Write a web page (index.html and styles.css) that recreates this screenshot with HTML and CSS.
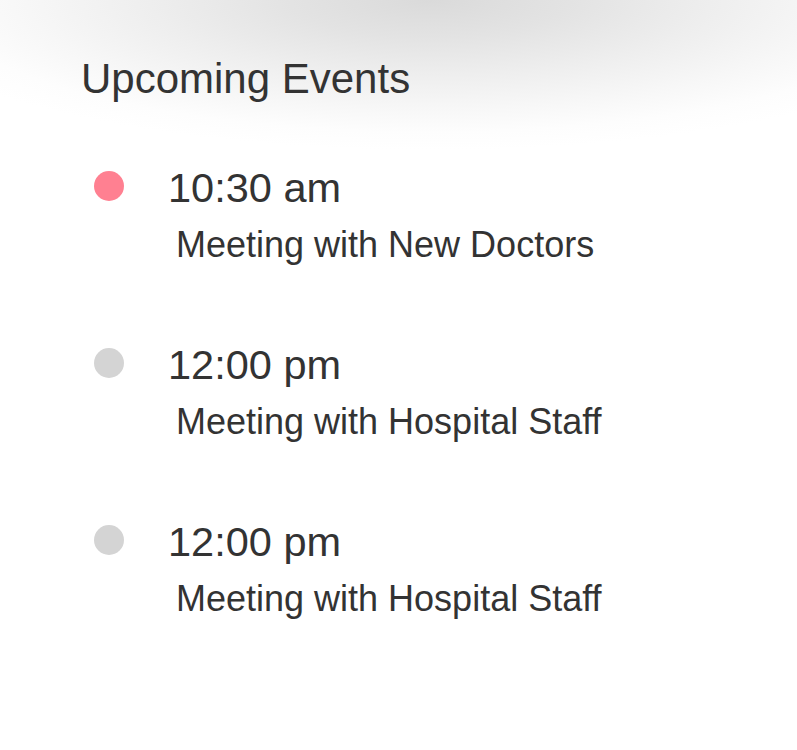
FILE: index.html
```html
<!DOCTYPE html>
<html>
<head>
<meta charset="utf-8">
<link rel="stylesheet" href="styles.css">
</head>
<body>
<div class="page">
  <section class="events">
    <h2 class="title">Upcoming Events</h2>
    <ul class="list">
      <li class="item">
        <span class="dot dot-active"></span>
        <div class="info">
          <div class="time">10:30 am</div>
          <div class="desc">Meeting with New Doctors</div>
        </div>
      </li>
      <li class="item">
        <span class="dot"></span>
        <div class="info">
          <div class="time">12:00 pm</div>
          <div class="desc">Meeting with Hospital Staff</div>
        </div>
      </li>
      <li class="item">
        <span class="dot"></span>
        <div class="info">
          <div class="time">12:00 pm</div>
          <div class="desc">Meeting with Hospital Staff</div>
        </div>
      </li>
    </ul>
  </section>
</div>
</body>
</html>
```

FILE: styles.css
```css
html, body {
  margin: 0;
  padding: 0;
  background: #fff;
}
body {
  font-family: "Liberation Sans", Arial, sans-serif;
  color: #333;
  width: 797px;
  height: 750px;
  overflow: hidden;
}
.page {
  height: 750px;
  background: radial-gradient(ellipse 560px 150px at 54% 0, #dadada 0%, #e3e3e3 25%, #eeeeee 50%, #f7f7f7 72%, #fdfdfd 88%, #fff 100%) no-repeat;
}
.events {
  padding: 56px 0 0 81px;
}
.title {
  margin: 0;
  font-weight: normal;
  font-size: 42px;
  line-height: 46px;
}
.list {
  list-style: none;
  margin: 62px 0 0;
  padding: 0;
}
.item {
  display: flex;
  align-items: flex-start;
  height: 177px;
}
.dot {
  width: 30px;
  height: 30px;
  border-radius: 50%;
  background: #d4d4d4;
  margin: 7px 0 0 13px;
  flex: none;
}
.dot-active {
  background: #ff8091;
}
.info {
  margin-left: 44px;
}
.time {
  font-size: 41.5px;
  line-height: 48px;
}
.desc {
  font-size: 36px;
  line-height: 40px;
  margin: 13px 0 0 8px;
}
```
